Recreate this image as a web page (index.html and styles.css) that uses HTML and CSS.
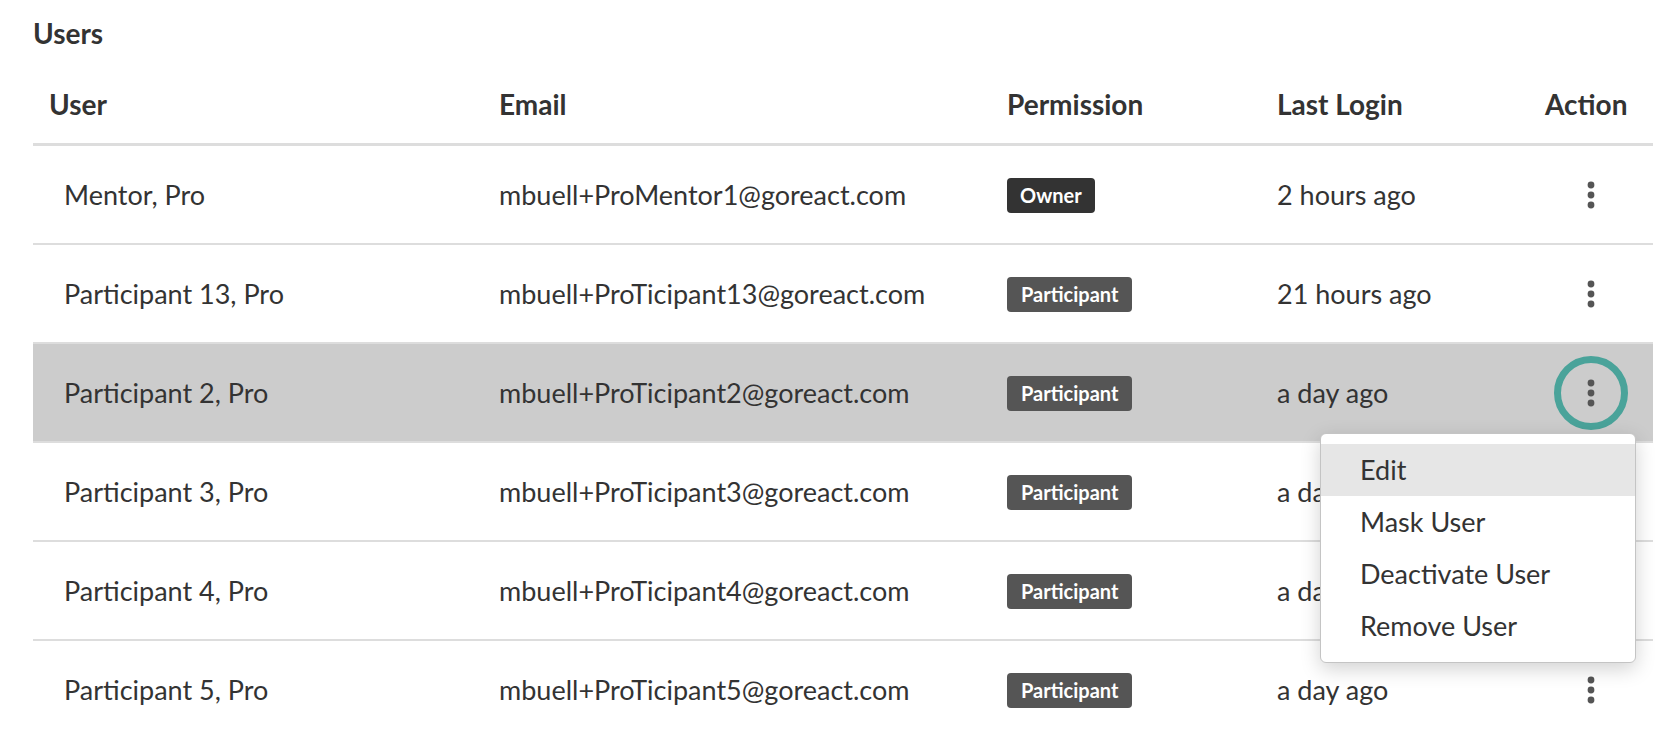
FILE: index.html
```html
<!DOCTYPE html>
<html>
<head>
    <meta charset="UTF-8">
    <title>Users</title>
    <link rel="stylesheet" href="styles.css">
</head>
<body>
    <div class="page">
        <h2 class="title">Users</h2>
        <div class="users">
            <div class="row head">
                <div class="cell first">User</div>
                <div class="cell">Email</div>
                <div class="cell">Permission</div>
                <div class="cell">Last Login</div>
                <div class="cell">Action</div>
            </div>
            <div class="row">
                <div class="cell first">Mentor, Pro</div>
                <div class="cell">mbuell+ProMentor1@goreact.com</div>
                <div class="cell"><span class="badge owner">Owner</span></div>
                <div class="cell">2 hours ago</div>
                <div class="cell"><button class="kebab"><svg width="8" height="28" viewBox="0 0 8 28"><circle cx="4" cy="4" r="3.4"/><circle cx="4" cy="14" r="3.4"/><circle cx="4" cy="24" r="3.4"/></svg></button></div>
            </div>
            <div class="row">
                <div class="cell first">Participant 13, Pro</div>
                <div class="cell">mbuell+ProTicipant13@goreact.com</div>
                <div class="cell"><span class="badge">Participant</span></div>
                <div class="cell">21 hours ago</div>
                <div class="cell"><button class="kebab"><svg width="8" height="28" viewBox="0 0 8 28"><circle cx="4" cy="4" r="3.4"/><circle cx="4" cy="14" r="3.4"/><circle cx="4" cy="24" r="3.4"/></svg></button></div>
            </div>
            <div class="row active">
                <div class="cell first">Participant 2, Pro</div>
                <div class="cell">mbuell+ProTicipant2@goreact.com</div>
                <div class="cell"><span class="badge">Participant</span></div>
                <div class="cell">a day ago</div>
                <div class="cell"><button class="kebab open"><svg width="8" height="28" viewBox="0 0 8 28"><circle cx="4" cy="4" r="3.4"/><circle cx="4" cy="14" r="3.4"/><circle cx="4" cy="24" r="3.4"/></svg></button></div>
                <ul class="menu">
                    <li class="hover">Edit</li>
                    <li>Mask User</li>
                    <li>Deactivate User</li>
                    <li>Remove User</li>
                </ul>
            </div>
            <div class="row">
                <div class="cell first">Participant 3, Pro</div>
                <div class="cell">mbuell+ProTicipant3@goreact.com</div>
                <div class="cell"><span class="badge">Participant</span></div>
                <div class="cell">a day ago</div>
                <div class="cell"><button class="kebab"><svg width="8" height="28" viewBox="0 0 8 28"><circle cx="4" cy="4" r="3.4"/><circle cx="4" cy="14" r="3.4"/><circle cx="4" cy="24" r="3.4"/></svg></button></div>
            </div>
            <div class="row">
                <div class="cell first">Participant 4, Pro</div>
                <div class="cell">mbuell+ProTicipant4@goreact.com</div>
                <div class="cell"><span class="badge">Participant</span></div>
                <div class="cell">a day ago</div>
                <div class="cell"><button class="kebab"><svg width="8" height="28" viewBox="0 0 8 28"><circle cx="4" cy="4" r="3.4"/><circle cx="4" cy="14" r="3.4"/><circle cx="4" cy="24" r="3.4"/></svg></button></div>
            </div>
            <div class="row">
                <div class="cell first">Participant 5, Pro</div>
                <div class="cell">mbuell+ProTicipant5@goreact.com</div>
                <div class="cell"><span class="badge">Participant</span></div>
                <div class="cell">a day ago</div>
                <div class="cell"><button class="kebab"><svg width="8" height="28" viewBox="0 0 8 28"><circle cx="4" cy="4" r="3.4"/><circle cx="4" cy="14" r="3.4"/><circle cx="4" cy="24" r="3.4"/></svg></button></div>
            </div>
        </div>
    </div>
</body>
</html>
```

FILE: styles.css
```css
html, body {
    margin: 0;
    height: 100%;
    overflow: hidden;
    background: #fff;
}

body {
    font-family: Lato, "Open Sans", sans-serif;
    color: #333;
}

.page {
    padding: 0 21px 0 33px;
}

/* Page heading */
.title {
    margin: 0;
    padding-top: 19px;
    font-size: 28px;
    line-height: 28px;
    font-weight: 700;
}

/* Table rows share one column template */
.row {
    position: relative;
    display: grid;
    grid-template-columns: 466px 508px 270px 268px 1fr;
    align-items: center;
    height: 99px;
    box-sizing: border-box;
    border-bottom: 2px solid #ddd;
    font-size: 27px;
}

.row.head {
    height: 99px;
    align-items: end;
    padding-bottom: 25px;
    border-bottom: 3px solid #ddd;
    font-size: 28px;
    font-weight: 700;
    line-height: 28px;
}

.row.head .cell.first {
    padding-left: 16px;
}

.cell.first {
    padding-left: 31px;
}

.row.active {
    background: #ccc;
}

/* Permission labels */
.badge {
    display: inline-block;
    height: 35px;
    line-height: 35px;
    padding: 0 14px;
    border-radius: 4px;
    background: #555;
    color: #fff;
    font-size: 20px;
    font-weight: 700;
    vertical-align: middle;
}

.badge.owner {
    padding: 0 13px;
    background: #333;
}

/* Action button */
.kebab {
    display: flex;
    align-items: center;
    justify-content: center;
    width: 74px;
    height: 74px;
    margin-left: 9px;
    padding: 0;
    border: 7px solid transparent;
    border-radius: 50%;
    background: none;
    fill: #555;
}

.kebab.open {
    border-color: #4aa39a;
}

/* Dropdown under the open action button */
.menu {
    position: absolute;
    right: 17px;
    top: 89px;
    z-index: 2;
    width: 316px;
    box-sizing: border-box;
    margin: 0;
    padding: 10px 0;
    list-style: none;
    background: #fff;
    border: 1px solid #c4c4c4;
    border-radius: 6px;
    box-shadow: 0 6px 20px rgba(0, 0, 0, 0.18);
}

.menu li {
    height: 52px;
    line-height: 52px;
    padding-left: 39px;
    font-size: 27px;
}

.menu li.hover {
    background: #e6e6e6;
}
```
